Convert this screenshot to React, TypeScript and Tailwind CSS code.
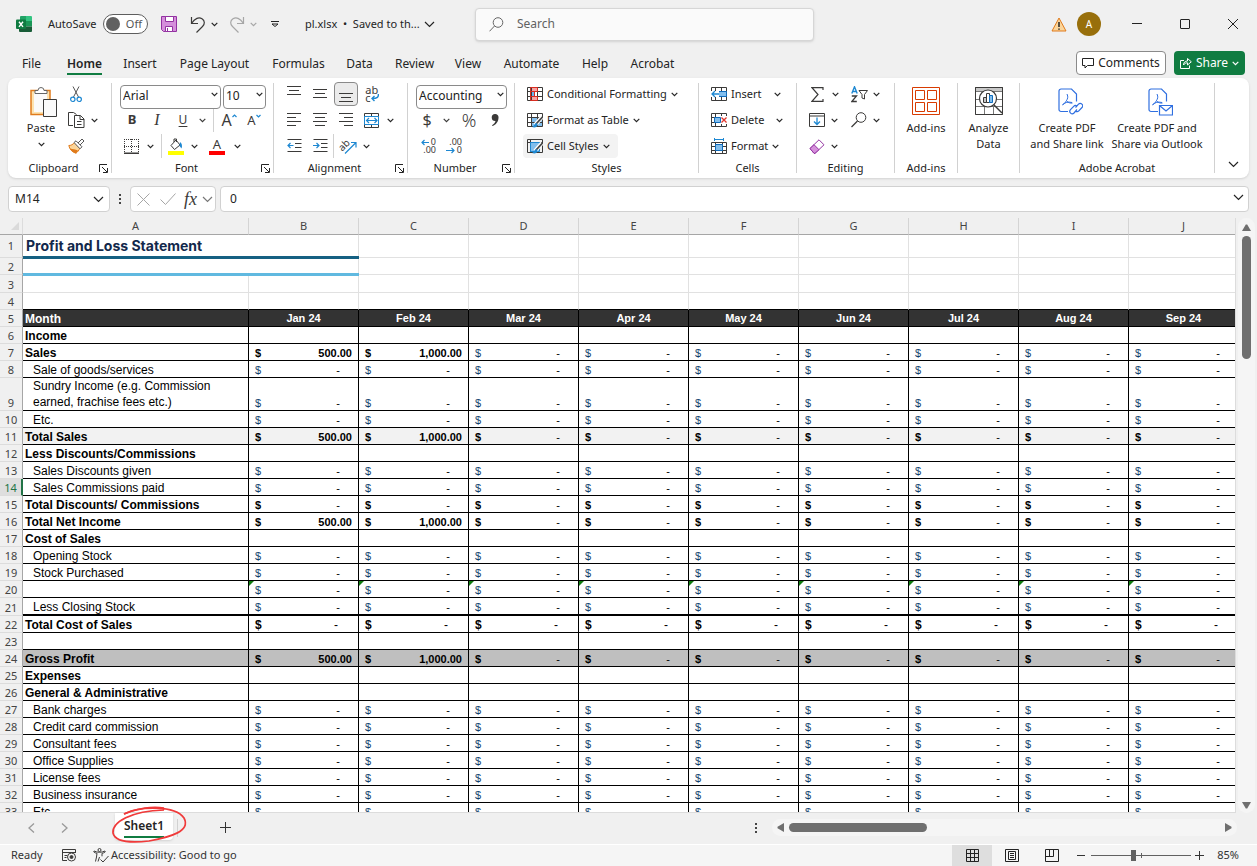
import type { ReactNode } from "react";
import clsx from "clsx";

const INK = "#3b3a39";
const BLUE = "#1e88d2";

/* ── shared bits ── */

function Chevron({ className }: { className?: string }) {
  return (
    <svg width="7" height="5" viewBox="0 0 7 5" fill="none" className={clsx("shrink-0", className)} aria-hidden>
      <path d="M.7.9 3.5 3.7 6.3.9" stroke="currentColor" strokeWidth="1.2" />
    </svg>
  );
}

function WideChevron({ className }: { className?: string }) {
  return (
    <svg width="11" height="7" viewBox="0 0 11 7" fill="none" className={clsx("shrink-0", className)} aria-hidden>
      <path d="M1 1l4.5 4.5L10 1" stroke="currentColor" strokeWidth="1.2" />
    </svg>
  );
}

function Tool({ label, className, children }: { label: string; className?: string; children: ReactNode }) {
  return (
    <button
      type="button"
      aria-label={label}
      className={clsx("flex h-6 shrink-0 items-center justify-center", className)}
    >
      {children}
    </button>
  );
}

function More({ label, className }: { label: string; className: string }) {
  return (
    <Tool label={label} className={className}>
      <Chevron />
    </Tool>
  );
}

function Row({ className, children }: { className?: string; children: ReactNode }) {
  return <div className={clsx("flex h-[26px] items-center", className)}>{children}</div>;
}

function Group({
  name,
  launcher,
  className,
  children,
}: {
  name?: string;
  launcher?: boolean;
  className: string;
  children: ReactNode;
}) {
  return (
    <section aria-label={name} className="flex shrink-0">
      <div className={clsx("flex flex-col pt-[3px]", className)}>
        <div className="h-[79px]">{children}</div>
        <div className="flex h-4 items-center text-[11px] leading-4">
          <span className="flex-1 text-center whitespace-nowrap">{name}</span>
          {launcher && (
            <button type="button" aria-label={`${name} settings`} className="mr-[3px]">
              <svg width="9" height="9" viewBox="0 0 9 9" fill="none" stroke="currentColor" aria-hidden>
                <path d="M.5 8V.5H8M3 3l5 5M8.500 4v4.500H4" />
              </svg>
            </button>
          )}
        </div>
      </div>
      <div className="my-[5px] w-px bg-[#d1d1d1]" />
    </section>
  );
}

function Divider({ className }: { className?: string }) {
  return <span className={clsx("h-6 w-px shrink-0 bg-[#d1d1d1]", className)} />;
}

function Picker({ label, value, className }: { label: string; value: string; className: string }) {
  return (
    <div className={clsx("relative h-6 shrink-0", className)}>
      <select
        aria-label={label}
        defaultValue={value}
        className="h-full w-full appearance-none rounded border border-[#8a8a8a] bg-white pb-0.5 pl-0.5 text-xs text-[#222]"
      >
        <option>{value}</option>
      </select>
      <Chevron className="pointer-events-none absolute top-[10px] right-[3px]" />
    </div>
  );
}

function Lines({ d }: { d: string }) {
  return (
    <svg width="14" height="16" viewBox="0 0 14 16" fill="none" stroke={INK} aria-hidden>
      <path d={d} />
    </svg>
  );
}

/* ── title bar ── */

function ExcelLogo() {
  return (
    <svg width="16" height="16" viewBox="0 0 16 16" aria-hidden>
      <path d="M4 1a1 1 0 0 1 1-1h5v5H4z" fill="#21a366" />
      <path d="M10 0h5a1 1 0 0 1 1 1v4h-6z" fill="#33c481" />
      <path d="M3 4.500h7V11H3z" fill="#107c41" />
      <path d="M10 5h6v5.500h-6z" fill="#1a9656" />
      <path d="M3 10.500h13V15a1 1 0 0 1-1 1H4a1 1 0 0 1-1-1z" fill="#185c37" />
      <rect y="3.500" width="10" height="9.500" rx="1" fill="#0f7b41" />
      <path d="M3 5.700l4 5.200M7 5.700l-4 5.200" stroke="#fff" strokeWidth="1.400" />
    </svg>
  );
}

function TitleBar() {
  return (
    <header className="flex h-12 shrink-0 items-center">
      <div className="flex w-[475px] shrink-0 items-center pl-4">
        <ExcelLogo />
        <label htmlFor="autosave" className="ml-4 w-[55px] text-[11px] whitespace-nowrap">
          AutoSave
        </label>
        <div className="relative h-5 w-[45px]">
          <input
            id="autosave"
            type="checkbox"
            role="switch"
            className="block h-full w-full appearance-none rounded-full border border-[#5e5e5e] bg-white"
          />
          <span className="pointer-events-none absolute top-[3px] left-[3px] size-3.5 rounded-full bg-[#616161]" />
          <span className="pointer-events-none absolute top-0 right-[6px] text-[11px] leading-5 text-[#555]">Off</span>
        </div>
        <Tool label="Save" className="ml-[13px] w-4">
          <svg width="16" height="16" viewBox="0 0 16 16" aria-hidden>
            <path d="M.5.500h15v15H2.500l-2-2z" fill="#d58fdb" stroke="#9332a1" />
            <path d="M4.500.500h8v5h-8zM4.500 10.500h7v5h-7z" fill="#fff" stroke="#9332a1" />
            <path d="M6.500 12v3" stroke="#9332a1" />
          </svg>
        </Tool>
        <Tool label="Undo" className="ml-[13px] w-4">
          <svg width="16" height="17" viewBox="0 0 16 17" fill="none" stroke={INK} strokeWidth="1.200" aria-hidden>
            <path d="M1.500 1v6.500H8M1.500 7.500C5 2 9 .8 12 2.800c3 2 3 5.200.5 7.700L6.500 16.500" />
          </svg>
        </Tool>
        <More label="Undo history" className="ml-0.5 w-3" />
        <Tool label="Redo" className="ml-[9px] w-4 text-[#a6a6a6]">
          <svg width="16" height="17" viewBox="0 0 16 17" fill="none" stroke="currentColor" strokeWidth="1.200" aria-hidden>
            <path d="M14.500 1v6.500H8M14.500 7.500C11 2 7 .8 4 2.800c-3 2-3 5.200-.5 7.700l6 6" />
          </svg>
        </Tool>
        <span className="flex text-[#a6a6a6]">
          <More label="Redo history" className="ml-0.5 w-3" />
        </span>
        <Tool label="Customize toolbar" className="ml-2 w-4">
          <svg width="8" height="7" viewBox="0 0 8 7" fill="none" stroke="currentColor" aria-hidden>
            <path d="M0 .5h8M1 3l3 2.500L7 3z" />
          </svg>
        </Tool>
        <button type="button" className="ml-[22px] flex items-center gap-1 text-[11px] whitespace-nowrap">
          <span>pl.xlsx&nbsp; •&nbsp; Saved to th...</span>
          <WideChevron />
        </button>
      </div>
      <div className="flex h-[33px] w-[339px] items-center rounded border border-[#d6d6d6] bg-[#fafafa] pl-[13px] shadow-sm">
        <svg width="15" height="15" viewBox="0 0 15 15" fill="none" stroke="#666" aria-hidden>
          <circle cx="9" cy="5.500" r="4.800" />
          <path d="M5.500 9 .5 14.300" />
        </svg>
        <input
          type="search"
          aria-label="Search"
          placeholder="Search"
          className="ml-[13px] min-w-0 flex-1 bg-transparent text-xs placeholder:text-[#616161]"
        />
      </div>
      <div className="ml-auto flex items-center">
        <svg width="16" height="15" viewBox="0 0 16 15" aria-hidden>
          <path d="M8 1 15 14H1z" fill="#fbd59a" stroke="#e07b1c" />
          <path d="M8 5v5M8 11.500v1.200" stroke="#222" strokeWidth="1.500" />
        </svg>
        <button
          type="button"
          aria-label="Account"
          className="mr-3 ml-2.5 size-6 rounded-full bg-[#986f0b] text-[10px] text-white"
        >
          A
        </button>
        <Tool label="Minimize" className="w-12">
          <svg width="10" height="10" viewBox="0 0 10 10" stroke="#222" aria-hidden>
            <path d="M0 4.500h10" />
          </svg>
        </Tool>
        <Tool label="Maximize" className="w-12">
          <svg width="10" height="10" viewBox="0 0 10 10" fill="none" stroke="#222" aria-hidden>
            <rect x=".5" y=".5" width="9" height="9" rx=".5" />
          </svg>
        </Tool>
        <Tool label="Close" className="w-12">
          <svg width="10" height="10" viewBox="0 0 10 10" stroke="#222" aria-hidden>
            <path d="M0 0l10 10M10 0 0 10" />
          </svg>
        </Tool>
      </div>
    </header>
  );
}

/* ── ribbon tabs ── */

const TABS = [
  { name: "File", width: "w-[41px]" },
  { name: "Home", width: "w-[65px]" },
  { name: "Insert", width: "w-[46px]" },
  { name: "Page Layout", width: "w-[103px]" },
  { name: "Formulas", width: "w-[65px]" },
  { name: "Data", width: "w-[57px]" },
  { name: "Review", width: "w-[53px]" },
  { name: "View", width: "w-[54px]" },
  { name: "Automate", width: "w-[73px]" },
  { name: "Help", width: "w-[54px]" },
  { name: "Acrobat", width: "w-[61px]" },
];

function RibbonTabs() {
  return (
    <nav className="flex h-[30px] shrink-0 items-center pr-3 pl-[11px] text-xs">
      {TABS.map((tab) => (
        <button key={tab.name} type="button" className={clsx("flex justify-center pt-0.5 whitespace-nowrap", tab.width)}>
          {tab.name === "Home" ? (
            <span className="border-b-2 border-[#107c41] pt-[3px] pb-px font-semibold">{tab.name}</span>
          ) : (
            <span>{tab.name}</span>
          )}
        </button>
      ))}
      <button
        type="button"
        className="ml-auto flex h-6 w-[90px] items-center justify-center gap-1 rounded border border-[#8a8a8a] bg-white"
      >
        <svg width="12" height="12" viewBox="0 0 12 12" fill="none" stroke="#222" className="shrink-0" aria-hidden>
          <path d="M.5 1.500h11v7H5.500L3 11V8.500H.5z" />
        </svg>
        Comments
      </button>
      <button
        type="button"
        className="ml-2 flex h-6 w-[71px] items-center justify-center gap-1 rounded bg-[#107c41] text-white"
      >
        <svg width="12" height="12" viewBox="0 0 12 12" fill="none" stroke="currentColor" className="shrink-0" aria-hidden>
          <path d="M4 3.500H.5v8h9V8.500M3.500 8c0-2.500 1.500-4 4-4V1.500l3.800 3.300L7.500 8V5.800C5.500 5.800 4.500 6.500 3.500 8z" />
        </svg>
        Share
        <Chevron />
      </button>
    </nav>
  );
}

/* ── ribbon icons ── */

function PasteIcon() {
  return (
    <svg width="34" height="30" viewBox="0 0 34 30" aria-hidden>
      <path d="M7 3.500h19v24H7z" fill="#fde3b0" stroke="#e07b1c" strokeWidth="1.500" />
      <path d="M10 6h13v19H10z" fill="#fafafa" />
      <path d="M11 6.500V3.500h3a3 3 0 0 1 6 0h3v3z" fill="#fff" stroke="#666" />
      <path d="M19.500 12.500h13v17h-13z" fill="#fafafa" stroke={INK} />
    </svg>
  );
}

function CutIcon() {
  return (
    <svg width="12" height="17" viewBox="0 0 12 17" fill="none" aria-hidden>
      <path d="M3 .5 8.500 11M9 .5 3.500 11" stroke="#555" />
      <circle cx="2.800" cy="13.300" r="2.200" stroke={BLUE} strokeWidth="1.200" />
      <circle cx="9.200" cy="13.300" r="2.200" stroke={BLUE} strokeWidth="1.200" />
    </svg>
  );
}

function CopyIcon() {
  return (
    <svg width="17" height="16" viewBox="0 0 17 16" fill="none" stroke={INK} aria-hidden>
      <path d="M5 13.500H.5V.5h5l3 2" />
      <path d="M6.500 3.500h6l3.500 3.500v8.500H6.500zM12 3.500V7.500h4M9 9.500h4.500M9 12.500h4.500" fill="#fff" />
    </svg>
  );
}

function BrushIcon() {
  return (
    <svg width="17" height="16" viewBox="0 0 17 16" fill="none" aria-hidden>
      <path d="M6.500 4.500C5 6.500 3 7.500.8 7.500c.7 3.500 3 6.500 7.200 7.800 1.500-1.300 3-3 4-5.300z" fill="#fbd59a" stroke="#e07b1c" />
      <path d="M2 10.500c3 1 5 .5 8 2L8 15.300C5 14.500 3 12.500 2 10.500z" fill="#e07b1c" />
      <path d="M6 4.500 8 2.800l6 6-2 2zM10 5l4-4 2 2-4 4" fill="#fff" stroke="#555" />
    </svg>
  );
}

function MergeIcon() {
  return (
    <svg width="16" height="15" viewBox="0 0 16 15" fill="none" aria-hidden>
      <path d="M.5.500h14v14H.5zM7.500.500v4M7.500 10.500v4" stroke={INK} />
      <path d="M.5 3.500h14v8H.5z" fill="#fff" stroke={BLUE} />
      <path d="M3 7.500h9.500M5 5 2.500 7.500 5 10M10.500 5 13 7.500 10.500 10" stroke={BLUE} strokeWidth="1.200" />
    </svg>
  );
}

function IndentIcon({ reverse }: { reverse?: boolean }) {
  return (
    <svg width="15" height="14" viewBox="0 0 15 14" fill="none" aria-hidden>
      <path d="M.5.500h14M8 4.500h6.500M8 8.500h6.500M.5 12.500h14" stroke={INK} />
      <path
        d={reverse ? "M0 6.500h5.500M3.500 4 6 6.500 3.500 9" : "M1 6.500h5.500M3.500 4 1 6.500 3.500 9"}
        stroke={BLUE}
        strokeWidth="1.200"
      />
    </svg>
  );
}

function TableIcon({ children, fill }: { children?: ReactNode; fill?: ReactNode }) {
  return (
    <svg width="16" height="15" viewBox="0 0 16 15" fill="none" className="shrink-0" aria-hidden>
      {fill}
      <path d="M.5.500h15v13H.5zM.5 4.500h15M.5 9.500h15M4.500.500v13M10.500.500v13" stroke={INK} />
      {children}
    </svg>
  );
}

function PdfPage({ children }: { children: ReactNode }) {
  return (
    <svg width="32" height="30" viewBox="-7 -1 32 30" fill="none" stroke="#2f6fe0" strokeWidth="1.200" aria-hidden>
      <path d="M10 23.500H3a2 2 0 0 1-2-2V3a2 2 0 0 1 2-2h10.500L18.500 6v7.500" />
      <path d="M9 6c1.500 3 .5 5-.5 6.500C7.500 14.500 6 16.500 4.500 17M8.500 12.500c1.500 2 3.500 3 6 2.500M4.500 16.500c2-1.800 6-3 9.500-2" strokeWidth="1" />
      {children}
    </svg>
  );
}

/* ── ribbon ── */

function WideButton({
  icon,
  text,
  gap = "ml-1",
  active,
}: {
  icon: ReactNode;
  text: string;
  gap?: string;
  active?: boolean;
}) {
  return (
    <button
      type="button"
      className={clsx(
        "flex h-6 items-center rounded pr-2 pl-1 text-[11px] whitespace-nowrap",
        active && "bg-[#f3f3f3]",
      )}
    >
      {icon}
      <span className="ml-1">{text}</span>
      <Chevron className={gap} />
    </button>
  );
}

function TallButton({ icon, lines, className }: { icon: ReactNode; lines: string[]; className: string }) {
  return (
    <button type="button" className={clsx("flex flex-col items-center pt-1.5 text-[11px] leading-4", className)}>
      <span className="mb-[5px] flex h-7">{icon}</span>
      {lines.map((line) => (
        <span key={line} className="block whitespace-nowrap">
          {line}
        </span>
      ))}
    </button>
  );
}

function Ribbon() {
  return (
    <div className="mx-2 flex h-[100px] shrink-0 overflow-hidden rounded-lg bg-white shadow">
      <Group name="Clipboard" launcher className="w-[103px]">
        <div className="flex pl-2.5">
          <div className="flex w-[46px] flex-col items-center pt-1.5">
            <button type="button" className="flex flex-col items-center text-[11px] leading-4">
              <PasteIcon />
              <span className="mt-[3px]">Paste</span>
            </button>
            <More label="Paste options" className="-mt-1 w-6" />
          </div>
          <div>
            <Row>
              <Tool label="Cut" className="w-6">
                <CutIcon />
              </Tool>
            </Row>
            <Row>
              <Tool label="Copy" className="w-6">
                <CopyIcon />
              </Tool>
              <More label="Copy options" className="w-3" />
            </Row>
            <Row>
              <Tool label="Format painter" className="w-6">
                <BrushIcon />
              </Tool>
            </Row>
          </div>
        </div>
      </Group>

      <Group name="Font" launcher className="w-[161px]">
        <Row className="gap-0.5 pl-2">
          <Picker label="Font" value="Arial" className="w-[101px]" />
          <Picker label="Font size" value="10" className="w-[43px]" />
        </Row>
        <Row className="pl-2 text-[#3b3a39]">
          <Tool label="Bold" className="w-6 text-[13px] font-bold">B</Tool>
          <Tool label="Italic" className="w-[26px] font-['Liberation_Serif',serif] text-base italic">I</Tool>
          <Tool label="Underline" className="w-[26px] text-xs underline underline-offset-2">U</Tool>
          <More label="Underline styles" className="w-3" />
          <Divider className="mx-[5px]" />
          <Tool label="Grow font" className="w-5">
            <span className="text-base leading-4">A</span>
            <svg width="5" height="4" viewBox="0 0 5 4" className="mb-2" fill="none" stroke={BLUE} aria-hidden>
              <path d="M.5 3 2.500 1l2 2" strokeWidth="1.200" />
            </svg>
          </Tool>
          <Tool label="Shrink font" className="w-[30px]">
            <span className="text-[13px] leading-4">A</span>
            <svg width="5" height="4" viewBox="0 0 5 4" className="mb-2" fill="none" stroke={BLUE} aria-hidden>
              <path d="M.5 1 2.500 3l2-2" strokeWidth="1.200" />
            </svg>
          </Tool>
        </Row>
        <Row className="pl-2">
          <Tool label="Borders" className="w-[22px]">
            <svg width="15" height="15" viewBox="0 0 15 15" fill="none" stroke={INK} aria-hidden>
              <path d="M0 .5h15M.5 0v14M14.500 0v14M7.500 0v14M0 7.500h15" strokeDasharray="1 1" />
              <path d="M0 14.300h15" strokeWidth="1.400" />
            </svg>
          </Tool>
          <More label="Border styles" className="w-4" />
          <Divider className="mx-[3px]" />
          <Tool label="Fill color" className="w-[22px]">
            <svg width="16" height="17" viewBox="0 0 16 17" fill="none" aria-hidden>
              <path d="M3 7.500 8 2l4 5-5.500 4.500zM6 4V1h2.500v3" stroke={INK} />
              <path d="M12 4c2 1.500 2.500 3.500 1.500 6.500L11.500 8z" fill={BLUE} />
              <path d="M0 13h16v4H0z" fill="#ff0" />
            </svg>
          </Tool>
          <More label="Fill colors" className="w-3.5" />
          <Tool label="Font color" className="w-8">
            <span className="flex flex-col items-center text-[13px] leading-[13px] text-[#3b3a39]">
              A
              <span className="h-1 w-4 bg-[#f00]" />
            </span>
          </Tool>
          <More label="Font colors" className="w-2" />
        </Row>
      </Group>

      <Group name="Alignment" launcher className="w-[133px]">
        <Row className="pl-[7px]">
          <Tool label="Top align" className="w-[26px]">
            <Lines d="M0 .5h14M2 4.500h10M0 8.500h14" />
          </Tool>
          <Tool label="Middle align" className="w-[26px]">
            <Lines d="M0 3.500h14M2 7.500h10M0 11.500h14" />
          </Tool>
          <Tool label="Bottom align" className="mx-px w-6 rounded border border-[#8a8a8a] bg-[#ebebeb]">
            <Lines d="M0 7.500h14M2 11.500h10M0 15.500h14" />
          </Tool>
          <Tool label="Wrap text" className="w-[26px]">
            <span className="flex flex-col text-left text-[11px] leading-[8px] text-[#3b3a39]">
              <span>ab</span>
              <span className="flex items-center">
                c
                <svg width="8" height="8" viewBox="0 0 8 8" fill="none" stroke={BLUE} aria-hidden>
                  <path d="M7.300 0c.4 3-1 4.500-6 4.500M3.500 2 1 4.500 3.500 7" strokeWidth="1.400" />
                </svg>
              </span>
            </span>
          </Tool>
        </Row>
        <Row className="pl-[7px]">
          <Tool label="Align left" className="w-[26px]">
            <Lines d="M0 1.500h14M0 5.500h9M0 9.500h14M0 13.500h9" />
          </Tool>
          <Tool label="Center" className="w-[26px]">
            <Lines d="M0 1.500h14M2 5.500h10M0 9.500h14M2 13.500h10" />
          </Tool>
          <Tool label="Align right" className="w-[26px]">
            <Lines d="M0 1.500h14M5 5.500h9M0 9.500h14M5 13.500h9" />
          </Tool>
          <Tool label="Merge and center" className="w-[26px]">
            <MergeIcon />
          </Tool>
          <More label="Merge options" className="w-2.5" />
        </Row>
        <Row className="pl-[7px]">
          <Tool label="Decrease indent" className="w-[26px]">
            <IndentIcon />
          </Tool>
          <Tool label="Increase indent" className="w-[26px]">
            <IndentIcon reverse />
          </Tool>
          <Divider />
          <Tool label="Orientation" className="w-7">
            <svg width="17" height="16" viewBox="0 0 17 16" fill="none" className="overflow-visible" aria-hidden>
              <text x="-1" y="10" fontSize="10" fill={INK} transform="rotate(-45 5 8)">ab</text>
              <path d="M5 15.500 15.500 5M11 4.500h5v5" stroke={BLUE} strokeWidth="1.200" />
            </svg>
          </Tool>
          <More label="Orientation options" className="w-2" />
        </Row>
      </Group>

      <Group name="Number" launcher className="w-[106px]">
        <Row className="pl-2">
          <Picker label="Number format" value="Accounting" className="w-[91px]" />
        </Row>
        <Row className="pl-2 text-[#3b3a39]">
          <Tool label="Accounting format" className="w-[22px] text-base">$</Tool>
          <More label="Currency" className="w-4" />
          <Tool label="Percent" className="w-[30px] text-lg font-light">%</Tool>
          <Tool label="Comma style" className="w-[22px]">
            <svg width="8" height="12" viewBox="0 0 8 12" aria-hidden>
              <path d="M4 0a3.400 3.400 0 0 1 3.500 3.800C7.500 7.500 5 11 1.500 12L1 11.200C3 10 4.300 8.500 4.500 7A3.400 3.400 0 1 1 4 0z" fill={INK} />
            </svg>
          </Tool>
        </Row>
        <Row className="pl-2">
          <Tool label="Increase decimal" className="w-6">
            <span className="flex w-4 flex-col items-end text-[9px] leading-[8px] text-[#3b3a39]">
              <span className="flex items-center gap-0.5">
                <svg width="8" height="7" viewBox="0 0 8 7" fill="none" stroke={BLUE} aria-hidden>
                  <path d="M8 3.500H1M3.500 1 1 3.500 3.500 6" strokeWidth="1.200" />
                </svg>
                0
              </span>
              <span>.00</span>
            </span>
          </Tool>
          <Tool label="Decrease decimal" className="w-7">
            <span className="flex w-4 flex-col items-end text-[9px] leading-[8px] text-[#3b3a39]">
              <span>.00</span>
              <span className="flex items-center gap-0.5">
                <svg width="9" height="7" viewBox="0 0 9 7" fill="none" stroke={BLUE} aria-hidden>
                  <path d="M0 3.500h8M5.500 1 8 3.500 5.500 6" strokeWidth="1.200" />
                </svg>
                0
              </span>
            </span>
          </Tool>
        </Row>
      </Group>

      <Group name="Styles" className="w-[183px]">
        <Row className="pl-2">
          <WideButton
            icon={
              <TableIcon
                fill={
                  <>
                    <path d="M3.500.500h7v4h-7zM3.500 9.500h7v4h-7z" fill="#f7a3a3" />
                    <path d="M4 5h3v4H4z" fill="#6cb2ee" />
                  </>
                }
              >
                <path d="M3.500.500h7v4h-7zM3.500 9.500h7v4h-7zM3.500 4.500v5M7.500 4.500v5" stroke="#d92c20" />
              </TableIcon>
            }
            text="Conditional Formatting"
          />
        </Row>
        <Row className="pl-2">
          <WideButton
            icon={
              <TableIcon fill={<path d="M4.500 4.500h11v9h-11z" fill="#83beec" />}>
                <path d="M15 4 8 12" stroke="#fff" strokeWidth="4" />
                <path d="M15.500 4 9 11" stroke="#444" strokeWidth="1.800" />
                <path d="M9.500 10c-2 0-2 3-4.500 4 3 1 5.500 0 5.500-2.500z" fill={BLUE} />
              </TableIcon>
            }
            text="Format as Table"
          />
        </Row>
        <Row className="pl-2">
          <WideButton
            active
            icon={
              <svg width="16" height="15" viewBox="0 0 16 15" fill="none" className="shrink-0" aria-hidden>
                <path d="M.5.500h15v13H.5zM.5 3.500h15M3.500.500v13" stroke={INK} />
                <path d="M3.500 3.500h9v9h-9z" fill="#83beec" stroke={BLUE} />
                <path d="M15 4 8 12" stroke="#fff" strokeWidth="4" />
                <path d="M15.500 4 9 11" stroke="#444" strokeWidth="1.800" />
                <path d="M9.500 10c-2 0-2 3-4.500 4 3 1 5.500 0 5.500-2.500z" fill={BLUE} />
              </svg>
            }
            text="Cell Styles"
          />
        </Row>
      </Group>

      <Group name="Cells" className="w-[97px]">
        <Row className="pl-2">
          <WideButton
            gap="ml-3"
            icon={
              <TableIcon>
                <path d="M7 4.500h8.500v5H7z" fill="#83beec" stroke="#0f6cbd" />
                <path d="M0 4h8v6H0z" fill="#fff" />
                <path d="M8 7H1M4 4 1 7l3 3" stroke={BLUE} strokeWidth="1.300" />
              </TableIcon>
            }
            text="Insert"
          />
        </Row>
        <Row className="pl-2">
          <WideButton
            gap="ml-3"
            icon={
              <TableIcon>
                <path d="M9 3h7v8H9z" fill="#fff" />
                <path d="M3.500 4.500h6v5h-6z" fill="#83beec" stroke="#0f6cbd" />
                <path d="M10.500 4.500l5 5M15.500 4.500l-5 5" stroke="#e0352b" strokeWidth="1.300" />
              </TableIcon>
            }
            text="Delete"
          />
        </Row>
        <Row className="pl-2">
          <WideButton
            icon={
              <svg width="16" height="17" viewBox="0 0 16 17" fill="none" className="shrink-0" aria-hidden>
                <path d="M.5 4.500h15v11H.5zM.5 8.500h15M.5 12.500h15M4.500 4.500v11M11.500 4.500v11" stroke={INK} />
                <path d="M4.500 6.500h7v6h-7z" fill="#83beec" stroke="#0f6cbd" />
                <path d="M3.500 1.500h9M3.500 0v3M12.500 0v3" stroke={BLUE} />
              </svg>
            }
            text="Format"
          />
        </Row>
      </Group>

      <Group name="Editing" className="w-[97px]">
        <Row className="pl-[9px]">
          <Tool label="AutoSum" className="w-[22px]">
            <svg width="13" height="15" viewBox="0 0 13 15" fill="none" stroke={INK} strokeWidth="1.200" aria-hidden>
              <path d="M12 3V.7H1l6 6.800-6 6.800h11V12" />
            </svg>
          </Tool>
          <More label="Sum functions" className="w-3.5" />
          <Tool label="Sort and filter" className="ml-1 w-[26px]">
            <svg width="17" height="17" viewBox="0 0 17 17" fill="none" aria-hidden>
              <path d="M.8 7.500 3.500.8l2.700 6.700M1.800 5.500h3.400" stroke={BLUE} strokeWidth="1.400" />
              <path d="M.8 10h4.700l-4.700 5.500h5" stroke={INK} strokeWidth="1.300" />
              <path d="M8 4.500h8.500L13.500 8.500V13l-2.500-1V8.500z" stroke={INK} />
            </svg>
          </Tool>
          <More label="Sort options" className="w-2" />
        </Row>
        <Row className="pl-[9px]">
          <Tool label="Fill" className="w-[22px]">
            <svg width="16" height="14" viewBox="0 0 16 14" fill="none" aria-hidden>
              <path d="M.5.500h15v13H.5zM.5 3h15" stroke={INK} />
              <path d="M8 4.500v7M5 8.500l3 3 3-3" stroke={BLUE} strokeWidth="1.300" />
            </svg>
          </Tool>
          <More label="Fill options" className="w-3" />
          <Tool label="Find and select" className="ml-1.5 w-[26px]">
            <svg width="16" height="16" viewBox="0 0 16 16" fill="none" stroke={INK} aria-hidden>
              <circle cx="10" cy="5.500" r="4.800" />
              <path d="M6.500 9 .5 15" strokeWidth="1.200" />
            </svg>
          </Tool>
          <More label="Find options" className="w-2" />
        </Row>
        <Row className="pl-[9px]">
          <Tool label="Clear" className="w-[22px]">
            <svg width="16" height="15" viewBox="0 0 16 15" fill="none" stroke="#9332a1" aria-hidden>
              <path d="M1 9.500 10 .8l5 5-9 8.500H5z" fill="#fff" />
              <path d="M1 9.500 5 5.700l5 5L6 14.300H5z" fill="#d58fdb" />
            </svg>
          </Tool>
          <More label="Clear options" className="w-3" />
        </Row>
      </Group>

      <Group name="Add-ins" className="w-[62px]">
        <TallButton
          className="w-full"
          lines={["Add-ins"]}
          icon={
            <svg width="28" height="28" viewBox="0 0 28 28" fill="none" stroke="#d83b01" aria-hidden>
              <path d="M.5.500h27v27H.5zM3.500 3.500h9v9h-9zM15.500 3.500h9v9h-9zM3.500 15.500h9v9h-9zM15.500 15.500h9v9h-9z" />
            </svg>
          }
        />
      </Group>

      <Group className="w-[61px]">
        <TallButton
          className="w-full"
          lines={["Analyze", "Data"]}
          icon={
            <svg width="28" height="28" viewBox="0 0 28 28" fill="none" stroke={INK} aria-hidden>
              <path d="M.5.500h27v4H.5z" fill="#c8c8c8" />
              <path d="M.5 4.500h27v23H.5zM.5 12.500h27M.5 19.500h27M9.500 19.500v8M18.500 19.500v8" stroke="#777" />
              <path d="M.5.500h27v27H.5z" />
              <circle cx="13" cy="11.500" r="8.500" fill="#fff" strokeWidth="1.200" />
              <path d="M8.500 10.500h3v5h-3z" fill="#c8c8c8" />
              <path d="M11.500 6.500h3v9h-3z" fill="#fff" />
              <path d="M14.500 8.500h3v7h-3z" fill="#83beec" stroke="#0f6cbd" />
              <path d="M19 18l8 8" strokeWidth="1.500" />
            </svg>
          }
        />
      </Group>

      <Group name="Adobe Acrobat" className="w-[194px]">
        <div className="flex pl-2">
          <TallButton
            className="w-[78px]"
            lines={["Create PDF", "and Share link"]}
            icon={
              <PdfPage>
                <path d="M17.500 19.500l3-3.300a2.400 2.400 0 0 1 3.500 3.300l-3.200 3.300a2.400 2.400 0 0 1-3.300.2M19 21.500l-3 3.500a2.400 2.400 0 0 1-3.500-3.300l3.200-3.400a2.400 2.400 0 0 1 3.300-.2" />
              </PdfPage>
            }
          />
          <TallButton
            className="w-[102px]"
            lines={["Create PDF and", "Share via Outlook"]}
            icon={
              <PdfPage>
                <path d="M11.500 17.500h13v9.500h-13zM11.500 17.500l6.500 5.500 6.500-5.500" />
              </PdfPage>
            }
          />
        </div>
      </Group>

      <button type="button" aria-label="Ribbon display options" className="ml-auto self-end pr-2.5 pb-2.5">
        <WideChevron />
      </button>
    </div>
  );
}

/* ── formula bar ── */

function FormulaBar() {
  return (
    <div className="mx-2 mt-2 flex h-[26px] shrink-0 items-center text-xs">
      <div className="flex h-full w-[102px] items-center rounded border border-[#d1d1d1] bg-white pr-[5px] pl-1.5">
        <input aria-label="Name box" defaultValue="M14" className="min-w-0 flex-1" />
        <WideChevron />
      </div>
      <svg width="2" height="12" viewBox="0 0 2 12" className="mx-[9px]" fill="#444" aria-hidden>
        <path d="M0 1h2v2H0zM0 5h2v2H0zM0 9h2v2H0z" />
      </svg>
      <div className="flex h-full w-[86px] items-center rounded border border-[#d1d1d1] bg-white pr-0.5 pl-1.5 text-[#a6a6a6]">
        <button type="button" aria-label="Cancel">
          <svg width="13" height="13" viewBox="0 0 13 13" fill="none" stroke="currentColor" aria-hidden>
            <path d="M.5.500l12 12M12.500.500l-12 12" />
          </svg>
        </button>
        <button type="button" aria-label="Enter" className="ml-2.5">
          <svg width="16" height="12" viewBox="0 0 16 12" fill="none" stroke="currentColor" aria-hidden>
            <path d="M.5 6.500l5 5L15.500.500" />
          </svg>
        </button>
        <button
          type="button"
          aria-label="Insert function"
          className="ml-2 font-['Liberation_Serif',serif] text-lg leading-5 text-[#3b3a39] italic"
        >
          fx
        </button>
        <WideChevron className="ml-auto text-[#777]" />
      </div>
      <div className="ml-1 flex h-full flex-1 items-center rounded border border-[#d1d1d1] bg-white pr-1 pl-[9px]">
        <input aria-label="Formula" defaultValue="0" className="min-w-0 flex-1" />
        <WideChevron className="mb-1" />
      </div>
    </div>
  );
}

/* ── worksheet ── */

type Kind = "blank" | "section" | "item" | "sales" | "total" | "cost";
type SheetRow = { n: number; label?: string; kind: Kind; height?: string; fill?: string; amounts?: boolean; flag?: boolean };

const MONTHS = ["Jan 24", "Feb 24", "Mar 24", "Apr 24", "May 24", "Jun 24", "Jul 24", "Aug 24", "Sep 24"];
const COLUMNS = ["B", "C", "D", "E", "F", "G", "H", "I", "J"];

const ROWS: SheetRow[] = [
  { n: 6, label: "Income", kind: "section" },
  { n: 7, label: "Sales", kind: "sales", amounts: true },
  { n: 8, label: "Sale of goods/services", kind: "item" },
  { n: 9, label: "Sundry Income (e.g. Commission earned, frachise fees etc.)", kind: "item", height: "h-[33px]" },
  { n: 10, label: "Etc.", kind: "item" },
  { n: 11, label: "Total Sales", kind: "total", amounts: true, fill: "bg-[#f2f2f2]" },
  { n: 12, label: "Less Discounts/Commissions", kind: "section" },
  { n: 13, label: "Sales Discounts given", kind: "item" },
  { n: 14, label: "Sales Commissions paid", kind: "item" },
  { n: 15, label: "Total Discounts/ Commissions", kind: "total" },
  { n: 16, label: "Total Net Income", kind: "total", amounts: true },
  { n: 17, label: "Cost of Sales", kind: "section" },
  { n: 18, label: "Opening Stock", kind: "item" },
  { n: 19, label: "Stock Purchased", kind: "item" },
  { n: 20, kind: "item", flag: true },
  { n: 21, label: "Less Closing Stock", kind: "item", height: "h-[18px]" },
  { n: 22, label: "Total Cost of Sales", kind: "cost" },
  { n: 23, kind: "blank" },
  { n: 24, label: "Gross Profit", kind: "total", amounts: true, fill: "bg-[#bfbfbf]" },
  { n: 25, label: "Expenses", kind: "section" },
  { n: 26, label: "General & Administrative", kind: "section" },
  { n: 27, label: "Bank charges", kind: "item" },
  { n: 28, label: "Credit card commission", kind: "item" },
  { n: 29, label: "Consultant fees", kind: "item" },
  { n: 30, label: "Office Supplies", kind: "item" },
  { n: 31, label: "License fees", kind: "item" },
  { n: 32, label: "Business insurance", kind: "item" },
  { n: 33, label: "Etc.", kind: "item" },
];

function RowNumber({ n }: { n: number }) {
  const selected = n === 14;
  return (
    <th
      scope="row"
      className={clsx(
        "border-b border-b-[#dcdcdc] p-0 font-['Noto_Sans',sans-serif] text-[11px] leading-[14px] font-normal",
        n === 1 ? "align-middle" : "align-bottom",
        selected
          ? "border-r-2 border-r-[#217346] bg-[#dedede] text-[#217346]"
          : "border-r border-r-[#a6a6a6] bg-[#f0f0f0] text-[#444]",
      )}
    >
      {n}
    </th>
  );
}

function LightCells({ from }: { from: number }) {
  return (
    <>
      {COLUMNS.slice(from).map((c) => (
        <td key={c} className="border-r border-b border-[#e1e1e1] p-0" />
      ))}
    </>
  );
}

function MoneyCell({ row, col }: { row: SheetRow; col: number }) {
  const cell = clsx(
    "relative border-r border-black p-0 align-bottom",
    row.n === 21 ? "border-b-2" : "border-b",
    row.fill,
  );
  if (row.kind === "section" || row.kind === "blank") return <td className={cell} />;

  const amount = row.amounts ? ["500.00", "1,000.00"][col] : undefined;
  const bold = row.kind === "total" || row.kind === "cost" || (row.kind === "sales" && col < 2);
  return (
    <td className={cell}>
      {row.flag && (
        <svg width="5" height="5" viewBox="0 0 5 5" className="absolute top-0 left-0" aria-hidden>
          <path d="M0 0h5L0 5z" fill="#107c10" />
        </svg>
      )}
      <div
        className={clsx(
          "flex justify-between pl-1.5 leading-[14px]",
          row.kind === "cost" ? "text-xs leading-[14px]" : "text-[11px] leading-[14px]",
          amount ? "pr-1.5" : row.kind === "cost" ? "pr-5" : "pr-[18px]",
        )}
      >
        <span className={bold ? "font-bold" : "text-[#123f6d]"}>$</span>
        <span className={amount ? "font-bold" : undefined}>{amount ?? "-"}</span>
      </div>
    </td>
  );
}

function Worksheet() {
  return (
    <main className="mt-1.5 flex min-h-0 flex-1">
      <div className="min-w-0 flex-1 overflow-hidden border-r border-b border-[#dcdcdc]">
        <table className="w-[1239px] table-fixed border-separate border-spacing-0 bg-white font-['Liberation_Sans',Arial,sans-serif] text-xs leading-4 text-black">
          <colgroup>
            <col className="w-[23px]" />
            <col className="w-[226px]" />
            {COLUMNS.map((c) => (
              <col key={c} className="w-[110px]" />
            ))}
          </colgroup>
          <thead>
            <tr className="h-[17px] bg-[#f0f0f0] font-['Noto_Sans',sans-serif] text-[11px] text-[#444]">
              <td className="border-r border-b border-r-[#dcdcdc] border-b-[#a6a6a6] p-0 align-bottom">
                <svg width="8" height="8" viewBox="0 0 8 8" className="mb-1 ml-[11px] block" aria-hidden>
                  <path d="M8 0v8H0z" fill="#dadada" />
                </svg>
              </td>
              {["A", ...COLUMNS].map((c) => (
                <th
                  key={c}
                  scope="col"
                  className="border-r border-b border-r-[#d4d4d4] border-b-[#a6a6a6] p-0 leading-4 font-normal"
                >
                  {c}
                </th>
              ))}
            </tr>
          </thead>
          <tbody>
            <tr className="h-[23px]">
              <RowNumber n={1} />
              <td
                colSpan={2}
                className="relative border-r border-b border-[#e1e1e1] p-0 pl-[3px] font-['Inter',sans-serif] text-sm leading-5 font-bold text-[#12284b]"
              >
                Profit and Loss Statement
                <span className="absolute -right-px -bottom-0.5 left-0 z-10 h-[3px] bg-[#156082]" />
              </td>
              <LightCells from={1} />
            </tr>
            <tr className="h-[17px]">
              <RowNumber n={2} />
              <td colSpan={2} className="relative border-r border-b border-[#e1e1e1] p-0">
                <span className="absolute -right-px -bottom-0.5 left-0 z-10 h-[3px] bg-[#60b9e0]" />
              </td>
              <LightCells from={1} />
            </tr>
            <tr className="h-[18px]">
              <RowNumber n={3} />
              <td className="border-r border-b border-[#e1e1e1] p-0" />
              <LightCells from={0} />
            </tr>
            <tr className="h-[17px]">
              <RowNumber n={4} />
              {["A", ...COLUMNS].map((c) => (
                <td key={c} className="border-r border-b border-r-[#e1e1e1] border-b-black p-0" />
              ))}
            </tr>
            <tr className="h-[17px] font-bold text-white">
              <RowNumber n={5} />
              <td className="border-r border-b border-black bg-[#333] p-0 pl-0.5 align-bottom leading-[14px]">Month</td>
              {MONTHS.map((m) => (
                <td key={m} className="border-r border-b border-black bg-[#333] p-0 text-center align-bottom text-[11px] leading-4">
                  {m}
                </td>
              ))}
            </tr>
            {ROWS.map((row) => (
              <tr key={row.n} className={row.height ?? "h-[17px]"}>
                <RowNumber n={row.n} />
                <td
                  className={clsx(
                    "border-r border-black p-0 align-bottom",
                    row.n === 21 ? "border-b-2" : "border-b",
                    row.n === 9 ? "leading-4" : "leading-[14px]",
                    row.kind === "item" ? "pr-5 pl-2.5" : "pl-0.5 font-bold",
                    row.fill,
                  )}
                >
                  {row.label}
                </td>
                {MONTHS.map((m, col) => (
                  <MoneyCell key={m} row={row} col={col} />
                ))}
              </tr>
            ))}
          </tbody>
        </table>
      </div>
      <div className="mr-0.5 ml-0.5 flex w-[17px] shrink-0 flex-col items-center rounded-full bg-[#f5f5f5] pt-1.5 pb-1">
        <svg width="9" height="7" viewBox="0 0 9 7" fill="#6f6f6f" aria-hidden>
          <path d="M3.800.500h1.400L9 7H0z" />
        </svg>
        <div className="mt-[5px] h-[123px] w-[9px] rounded-full bg-[#6f6f6f]" />
        <svg width="9" height="7" viewBox="0 0 9 7" fill="#6f6f6f" className="mt-auto" aria-hidden>
          <path d="M0 0h9L5.200 6.500H3.800z" />
        </svg>
      </div>
    </main>
  );
}

/* ── sheet tabs and status bar ── */

function SheetTabs() {
  return (
    <div className="flex h-[31px] shrink-0 items-center pr-5 pb-0.5 pl-7">
      <button type="button" aria-label="Previous sheet">
        <svg width="7" height="10" viewBox="0 0 7 10" fill="none" stroke="#999" strokeWidth="1.300" aria-hidden>
          <path d="M6 .5 1 5l5 4.500" />
        </svg>
      </button>
      <button type="button" aria-label="Next sheet" className="ml-[26px]">
        <svg width="7" height="10" viewBox="0 0 7 10" fill="none" stroke="#999" strokeWidth="1.300" aria-hidden>
          <path d="M1 .5 6 5 1 9.500" />
        </svg>
      </button>
      <div className="relative ml-[47px] h-full">
        <button
          type="button"
          className="flex h-[27px] w-[58px] items-center justify-center rounded-b bg-white text-xs font-semibold shadow-sm"
        >
          <span className="border-b-2 border-[#107c41] leading-5">Sheet1</span>
        </button>
        <svg
          width="78"
          height="40"
          viewBox="0 0 78 40"
          fill="none"
          stroke="#f03a3a"
          strokeWidth="1.700"
          className="absolute -top-2 -left-1 overflow-visible"
          aria-hidden
        >
          <path d="M13 9C29 1 64 0 73 13c7 13-13 19-35 23C20 38 4 37 2 28 1 17 20 6 53 5" />
          <path d="M13 9C26 3 42 1 53 3" />
        </svg>
      </div>
      <span className="ml-1 h-[18px] w-px bg-[#d1d1d1]" />
      <button type="button" aria-label="New sheet" className="ml-[42px]">
        <svg width="11" height="11" viewBox="0 0 11 11" stroke="#333" aria-hidden>
          <path d="M5.500 0v11M0 5.500h11" />
        </svg>
      </button>
      <svg width="2" height="12" viewBox="0 0 2 12" fill="#444" className="ml-auto" aria-hidden>
        <path d="M0 1h2v2H0zM0 5h2v2H0zM0 9h2v2H0z" />
      </svg>
      <div className="ml-[15px] flex h-[17px] w-[465px] items-center rounded-full bg-[#f5f5f5] px-[5px]">
        <svg width="7" height="9" viewBox="0 0 7 9" fill="#6f6f6f" aria-hidden>
          <path d="M7 0v9L.5 5.200V3.800z" />
        </svg>
        <div className="ml-[5px] h-[9px] w-[138px] rounded-full bg-[#6f6f6f]" />
        <svg width="7" height="9" viewBox="0 0 7 9" fill="#6f6f6f" className="ml-auto" aria-hidden>
          <path d="M0 0v9l6.500-3.800V3.800z" />
        </svg>
      </div>
    </div>
  );
}

function StatusBar() {
  return (
    <footer className="flex h-[22px] shrink-0 items-center border-t border-white bg-[#f5f5f5] pr-[18px] pl-[11px] text-[11px] text-[#333]">
      <span className="w-[51px]">Ready</span>
      <svg width="15" height="13" viewBox="0 0 15 13" fill="none" stroke={INK} aria-hidden>
        <path d="M5 11.500H.5V.500h13V4M.5 3.500h13M2.500 6.500h3M2.500 8.500h2" />
        <circle cx="9.500" cy="8" r="4" fill="#f5f5f5" />
        <circle cx="9.500" cy="8" r="1.500" fill={INK} />
      </svg>
      <button type="button" className="ml-4 flex items-center gap-0.5">
        <svg width="16" height="15" viewBox="0 0 16 15" fill="none" stroke={INK} aria-hidden>
          <circle cx="6.500" cy="2" r="1.500" />
          <path d="M1 3c-.8 1.200.5 1.700 3 2.300L3.500 9l-1 4.500M5 13.500 6.500 9M12 3c.8 1.200-.5 1.700-3 2.300v3M1 3c2 .8 3.500 1.300 5.500 1.300S10 3.800 12 3M7.500 11.500l2.500 2.500L15.500 8" />
        </svg>
        Accessibility: Good to go
      </button>
      <Tool label="Normal view" className="ml-auto h-[21px] w-10 bg-[#dedede]">
        <svg width="13" height="13" viewBox="0 0 13 13" fill="none" stroke="#222" aria-hidden>
          <path d="M.5.500h12v12H.5zM4.500.500v12M8.500.500v12M.5 4.500h12M.5 8.500h12" />
        </svg>
      </Tool>
      <Tool label="Page layout view" className="w-10">
        <svg width="14" height="13" viewBox="0 0 14 13" fill="none" stroke="#222" aria-hidden>
          <path d="M.5.500h13v12H.5zM3.500 2.500h7v8h-7zM5 4.500h4M5 6.500h4M5 8.500h4" />
        </svg>
      </Tool>
      <Tool label="Page break preview" className="w-10">
        <svg width="14" height="13" viewBox="0 0 14 13" fill="none" stroke="#222" aria-hidden>
          <path d="M.5.500h13v12H.5zM.5 7.500h8v-7M4.500.500v7" />
        </svg>
      </Tool>
      <Tool label="Zoom out" className="ml-[5px] w-2">
        <svg width="8" height="9" viewBox="0 0 8 9" stroke="#333" aria-hidden>
          <path d="M0 4.500h8" />
        </svg>
      </Tool>
      <div className="relative ml-[6px] flex h-[11px] w-[100px] items-center">
        <span className="h-px w-full bg-[#616161]" />
        <span className="absolute top-[3px] left-1/2 h-[5px] w-px bg-[#616161]" />
        <input
          type="range"
          aria-label="Zoom"
          min={0}
          max={100}
          defaultValue={42}
          className="absolute inset-0 w-full appearance-none bg-transparent [&::-webkit-slider-thumb]:h-[11px] [&::-webkit-slider-thumb]:w-[5px] [&::-webkit-slider-thumb]:appearance-none [&::-webkit-slider-thumb]:bg-[#616161]"
        />
      </div>
      <Tool label="Zoom in" className="ml-1 w-[9px]">
        <svg width="9" height="9" viewBox="0 0 9 9" stroke="#333" aria-hidden>
          <path d="M4.500 0v9M0 4.500h9" />
        </svg>
      </Tool>
      <span className="ml-3 w-[23px] text-right">85%</span>
    </footer>
  );
}

export default function App() {
  return (
    <div className="flex h-screen flex-col overflow-hidden bg-[#f0f0f0] font-['Noto_Sans',sans-serif] text-[#242424]">
      <TitleBar />
      <RibbonTabs />
      <Ribbon />
      <FormulaBar />
      <Worksheet />
      <SheetTabs />
      <StatusBar />
    </div>
  );
}
